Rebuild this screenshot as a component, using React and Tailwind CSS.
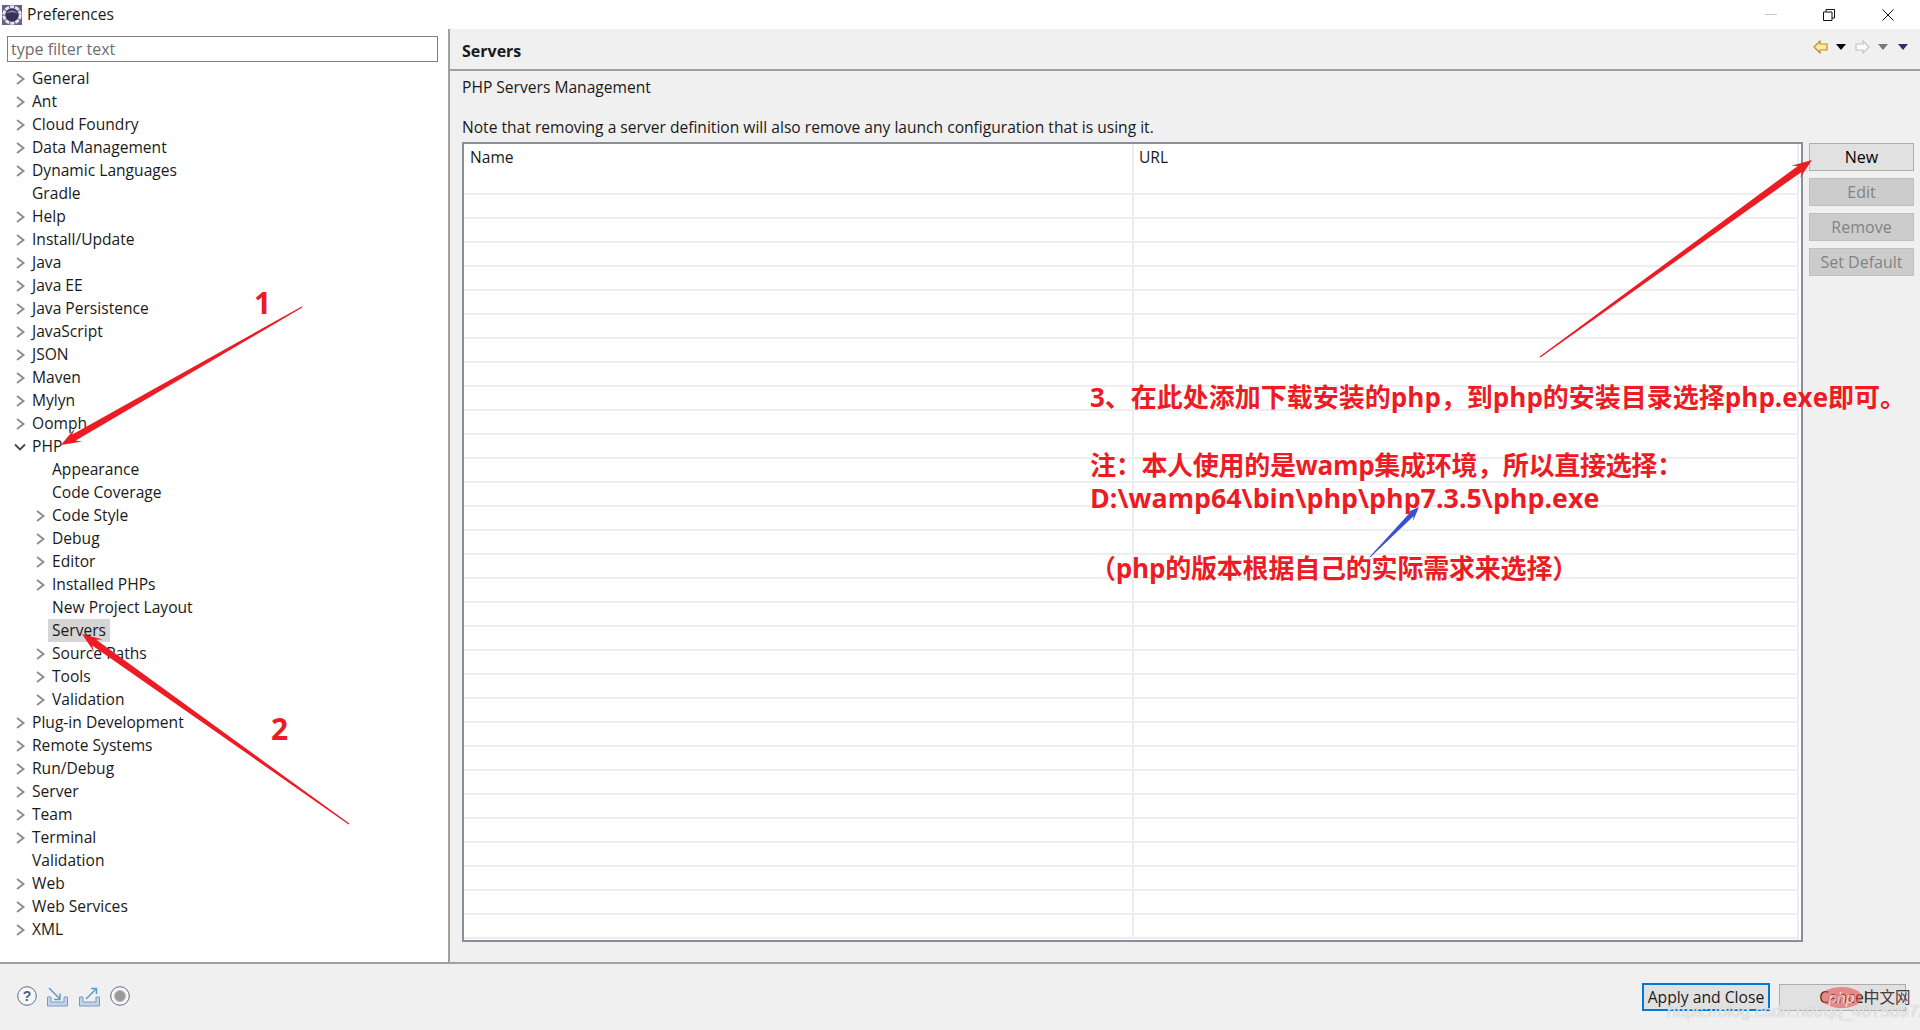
const sans = "font-['Open_Sans','Noto_Sans_CJK_SC',sans-serif]";

const tree = [
  { name: 'General', arrow: true },
  { name: 'Ant', arrow: true },
  { name: 'Cloud Foundry', arrow: true },
  { name: 'Data Management', arrow: true },
  { name: 'Dynamic Languages', arrow: true },
  { name: 'Gradle' },
  { name: 'Help', arrow: true },
  { name: 'Install/Update', arrow: true },
  { name: 'Java', arrow: true },
  { name: 'Java EE', arrow: true },
  { name: 'Java Persistence', arrow: true },
  { name: 'JavaScript', arrow: true },
  { name: 'JSON', arrow: true },
  { name: 'Maven', arrow: true },
  { name: 'Mylyn', arrow: true },
  { name: 'Oomph', arrow: true },
  { name: 'PHP', open: true },
  { name: 'Appearance', sub: true },
  { name: 'Code Coverage', sub: true },
  { name: 'Code Style', sub: true, arrow: true },
  { name: 'Debug', sub: true, arrow: true },
  { name: 'Editor', sub: true, arrow: true },
  { name: 'Installed PHPs', sub: true, arrow: true },
  { name: 'New Project Layout', sub: true },
  { name: 'Servers', sub: true, selected: true },
  { name: 'Source Paths', sub: true, arrow: true },
  { name: 'Tools', sub: true, arrow: true },
  { name: 'Validation', sub: true, arrow: true },
  { name: 'Plug-in Development', arrow: true },
  { name: 'Remote Systems', arrow: true },
  { name: 'Run/Debug', arrow: true },
  { name: 'Server', arrow: true },
  { name: 'Team', arrow: true },
  { name: 'Terminal', arrow: true },
  { name: 'Validation' },
  { name: 'Web', arrow: true },
  { name: 'Web Services', arrow: true },
  { name: 'XML', arrow: true },
];

function Twisty({ open, arrow }) {
  if (open) {
    return (
      <svg width="12" height="8" viewBox="0 0 12 8" className="shrink-0">
        <path d="M1 1.5 L6 6.5 L11 1.5" fill="none" stroke="#444" strokeWidth="1.8" />
      </svg>
    );
  }
  if (!arrow) return <span className="w-[12px] shrink-0" />;
  return (
    <svg width="12" height="12" viewBox="0 0 12 12" className="shrink-0">
      <path d="M3 1 L9.5 6 L3 11" fill="none" stroke="#8c8c8c" strokeWidth="1.9" />
    </svg>
  );
}

function TreeRow({ item }) {
  return (
    <div className={`flex h-[23px] items-center gap-[2px] ${item.sub ? 'pl-[34px]' : 'pl-[14px]'}`}>
      <Twisty open={item.open} arrow={item.arrow} />
      <span className={`px-[4px] leading-[23px] ${item.selected ? 'bg-[#d5d5d5]' : ''}`}>{item.name}</span>
    </div>
  );
}

function SideButton({ label, disabled }) {
  return (
    <button
      className={`h-[28px] w-[105px] border text-center text-[16px] ${
        disabled ? 'border-[#bfbfbf] bg-[#cccccc] text-[#838383]' : 'border-[#adadad] bg-[#e1e1e1] text-black'
      }`}
    >
      {label}
    </button>
  );
}

function Tri({ color }) {
  return (
    <svg width="10" height="6" viewBox="0 0 10 6" className="block">
      <path d="M0 0 H10 L5 6 Z" fill={color} />
    </svg>
  );
}

function NavArrow({ back }) {
  return (
    <svg width="15" height="14" viewBox="0 0 15 14" className={`block ${back ? '' : '-scale-x-100'}`}>
      <path
        d="M1 7 L7 1 V4 H14 V10 H7 V13 Z"
        fill={back ? '#fde9a8' : '#fbfbfb'}
        stroke={back ? '#c98a1e' : '#c4c4c4'}
        strokeWidth="1.2"
      />
    </svg>
  );
}

function TrayIcon({ out }) {
  return (
    <svg width="23" height="21" viewBox="0 0 23 21" className="block">
      <path d="M1.5 11 H5 V16 H18 V11 H21.5 V20 H1.5 Z" fill="#c3d3e8" stroke="#7d9ac4" strokeWidth="1" />
      {out ? (
        <path d="M8 13 L18 3 M13 2.5 H18.5 V8" fill="none" stroke="#5f9ec4" strokeWidth="1.5" />
      ) : (
        <path d="M3 2 L14 13 M14 7.5 V13.5 H8" fill="none" stroke="#5f9ec4" strokeWidth="1.5" />
      )}
    </svg>
  );
}

// red / blue annotation arrows, thin at the tail and thick at the head
function arrowPoints(x1, y1, x2, y2, tail, neck, headLen, headW) {
  const len = Math.hypot(x2 - x1, y2 - y1);
  const ux = (x2 - x1) / len;
  const uy = (y2 - y1) / len;
  const px = -uy;
  const py = ux;
  const nx = x2 - ux * headLen * 0.75;
  const ny = y2 - uy * headLen * 0.75;
  const bx = x2 - ux * headLen;
  const by = y2 - uy * headLen;
  return [
    [x1 + (px * tail) / 2, y1 + (py * tail) / 2],
    [nx + (px * neck) / 2, ny + (py * neck) / 2],
    [bx + (px * headW) / 2, by + (py * headW) / 2],
    [x2, y2],
    [bx - (px * headW) / 2, by - (py * headW) / 2],
    [nx - (px * neck) / 2, ny - (py * neck) / 2],
    [x1 - (px * tail) / 2, y1 - (py * tail) / 2],
  ]
    .map((p) => p.join(','))
    .join(' ');
}

function Arrows() {
  return (
    <svg width="1920" height="1030" className="pointer-events-none absolute left-0 top-0">
      <polygon points={arrowPoints(302, 307, 61, 445, 1.2, 7, 20, 15)} fill="#ed1c24" />
      <polygon points={arrowPoints(349, 824, 82, 634, 1.2, 7, 20, 15)} fill="#ed1c24" />
      <polygon points={arrowPoints(1540, 357, 1812, 160, 1.2, 7, 20, 15)} fill="#ed1c24" />
      <polygon points={arrowPoints(1370, 557, 1419, 507, 1, 5, 14, 11)} fill="#3b4fd0" />
    </svg>
  );
}

const noteCls =
  "absolute whitespace-nowrap font-bold leading-[34px] text-[#ed1c24] font-['Open_Sans','Noto_Sans_CJK_SC',sans-serif]";

export default function App() {
  return (
    <div className={`relative flex h-[1030px] w-[1920px] flex-col overflow-hidden bg-white text-[15.6px] text-[#1a1a1a] ${sans}`}>
      {/* title bar */}
      <div className="flex h-[29px] shrink-0 items-center bg-white">
        <svg width="20" height="20" viewBox="0 0 20 20" className="ml-[2px]">
          <rect width="20" height="20" fill="#6a5c8c" />
          <circle cx="10" cy="10" r="8.2" fill="none" stroke="#e6e6e6" strokeWidth="3" strokeDasharray="4.2 1" />
          <circle cx="10" cy="10" r="6.5" fill="#34335a" />
          <path d="M4.5 8.5 A6 5 0 0 1 15.5 8.5 A8 5 0 0 0 4.5 8.5" fill="#8f8fb0" />
        </svg>
        <span className="ml-[5px]">Preferences</span>
        <div className="ml-auto flex items-center">
          <span className="mr-[46px] h-px w-[12px] bg-[#c8c8c8]" />
          <svg width="12" height="12" viewBox="0 0 12 12" className="mr-[47px]">
            <path d="M0.5 3 H9 V11.5 H0.5 Z M3 3 V0.5 H11.5 V9 H9" fill="none" stroke="#111" />
          </svg>
          <svg width="12" height="12" viewBox="0 0 12 12" className="mr-[26px]">
            <path d="M0.5 0.5 L11.5 11.5 M11.5 0.5 L0.5 11.5" fill="none" stroke="#111" />
          </svg>
        </div>
      </div>

      <div className="flex min-h-0 flex-1">
        {/* tree */}
        <aside className="w-[448px] shrink-0 bg-white pl-[7px] pr-[10px] pt-[7px]">
          <div className="flex h-[26px] items-center border border-[#7f7f7f] px-[3px] text-[16px] text-[#6d6d6d]">type filter text</div>
          <div className="-ml-[7px] pt-[5px]">
            {tree.map((item, i) => (
              <TreeRow key={i} item={item} />
            ))}
          </div>
        </aside>

        {/* page */}
        <main className="flex min-w-0 flex-1 flex-col border-l-2 border-[#a0a0a0] bg-[#f0f0f0]">
          <div className="flex h-[42px] shrink-0 items-center border-b-2 border-[#a0a0a0] pl-[12px] pr-[12px]">
            <span className="mt-[4px] text-[16px] font-bold">Servers</span>
            <div className="mb-[4px] ml-auto flex items-center">
              <NavArrow back />
              <span className="ml-[8px]"><Tri color="#000" /></span>
              <span className="ml-[9px]"><NavArrow /></span>
              <span className="ml-[8px]"><Tri color="#777" /></span>
              <span className="ml-[10px]"><Tri color="#40266e" /></span>
            </div>
          </div>
          <div className="flex min-h-0 flex-1 flex-col pl-[12px] pr-[6px]">
            <div className="mt-[5px] h-[22px] leading-[22px]">PHP Servers Management</div>
            <div className="mt-[18px] h-[22px] leading-[22px]">Note that removing a server definition will also remove any launch configuration that is using it.</div>
            <div className="mt-[4px] flex h-[800px] gap-[6px]">
              <div className="flex w-[1341px] border-2 border-[#8a8e99] bg-white pr-[2px]">
                <div className="flex flex-1 flex-col">
                  <div className="flex h-[49px] shrink-0 leading-[26px]">
                    <span className="w-[668px] pl-[6px]">Name</span>
                    <span className="border-l-2 border-[#e9edf6] pl-[5px]">URL</span>
                  </div>
                  <div className="flex-1">
                    {Array.from({ length: 31 }).map((_, i) => (
                      <div key={i} className="flex h-[24px] border-t-2 border-[#eeeeee]">
                        <span className="ml-[668px] border-l-2 border-[#e9edf6]" />
                      </div>
                    ))}
                    <div className="h-[2px] bg-[#eeeeee]" />
                  </div>
                </div>
                <span className="w-[2px] bg-[#e9edf6]" />
              </div>
              <div className="flex flex-col gap-[7px] pt-[1px]">
                <SideButton label="New" />
                <SideButton label="Edit" disabled />
                <SideButton label="Remove" disabled />
                <SideButton label="Set Default" disabled />
              </div>
            </div>
          </div>
        </main>
      </div>

      {/* footer */}
      <footer className="flex h-[68px] shrink-0 items-center border-t-2 border-[#a0a0a0] bg-[#f0f0f0] pl-[17px] pr-[14px]">
        <div className="mb-[2px] flex items-center">
          <svg width="20" height="20" viewBox="0 0 20 20" className="block">
            <circle cx="10" cy="10" r="9.3" fill="#f7f7f7" stroke="#5c6c8c" />
            <text x="10" y="15" textAnchor="middle" fontSize="14" fontWeight="700" fill="#4c5f85" fontFamily="Liberation Sans">?</text>
          </svg>
          <span className="ml-[9px]"><TrayIcon /></span>
          <span className="ml-[9px]"><TrayIcon out /></span>
          <svg width="20" height="20" viewBox="0 0 20 20" className="ml-[9px] block">
            <circle cx="10" cy="10" r="9.3" fill="#f7f7f7" stroke="#5c6c8c" />
            <circle cx="10" cy="10" r="5.5" fill="#999" stroke="#bbb" />
          </svg>
        </div>
        <button className="ml-auto h-[28px] w-[128px] border-2 border-[#0078d7] bg-[#e1e1e1] pt-[1px] text-[15.7px]">Apply and Close</button>
        <button className="ml-[9px] h-[27px] w-[127px] border border-[#adadad] bg-[#e1e1e1] pl-[2px] pt-[1px] text-[15.7px]">Cancel</button>
      </footer>

      {/* annotations over the screenshot */}
      <Arrows />
      <span className={`${noteCls} left-[254px] top-[286px] text-[30px]`}>1</span>
      <span className={`${noteCls} left-[271px] top-[712px] text-[30px]`}>2</span>
      <span className={`${noteCls} left-[1090px] top-[380px] text-[26px]`}>3、在此处添加下载安装的php，到php的安装目录选择php.exe即可。</span>
      <span className={`${noteCls} left-[1090px] top-[448px] text-[26px] tracking-[-0.3px]`}>注：本人使用的是wamp集成环境，所以直接选择：</span>
      <span className={`${noteCls} left-[1090px] top-[481px] text-[26.8px]`}>D:\wamp64\bin\php\php7.3.5\php.exe</span>
      <span className={`${noteCls} left-[1090px] top-[551px] text-[26px] tracking-[-0.2px]`}>（php的版本根据自己的实际需求来选择）</span>

      {/* site watermark */}
      <div className="absolute left-[1821px] top-[987px] flex h-[21px] w-[41px] items-center justify-center rounded-[50%] bg-[#e8504f]/60 text-[15px] italic leading-none text-white/70">
        php
      </div>
      <span className="absolute left-[1864px] top-[987px] text-[15.5px] leading-[20px] text-[#4a3a3a]">中文网</span>
      <span className="absolute left-[1667px] top-[1002px] whitespace-nowrap font-['Liberation_Sans',sans-serif] text-[17px] leading-[20px] text-white/70 [text-shadow:0_0_1px_#aaa]">
        https://blog.csdn.net/qq_40750972
      </span>
    </div>
  );
}
